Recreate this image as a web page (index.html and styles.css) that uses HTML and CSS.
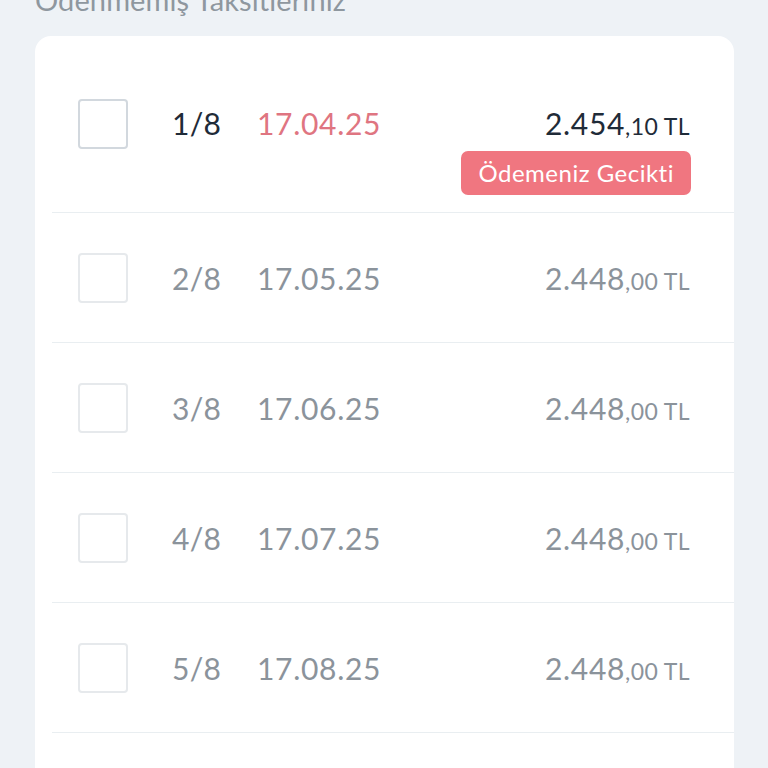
FILE: index.html
```html
<!DOCTYPE html>
<html lang="tr">
<head>
<meta charset="utf-8">
<link rel="stylesheet" href="styles.css">
</head>
<body>
<div class="page">
  <h2 class="title">Ödenmemiş Taksitleriniz</h2>
  <div class="card">
    <div class="row first">
      <span class="check dark"></span>
      <span class="no">1/8</span>
      <span class="date late">17.04.25</span>
      <span class="amount"><span class="main">2.454</span><span class="dec">,10 TL</span>
        <span class="badge">Ödemeniz Gecikti</span>
      </span>
    </div>
    <div class="row">
      <span class="check"></span>
      <span class="no">2/8</span>
      <span class="date">17.05.25</span>
      <span class="amount"><span class="main">2.448</span><span class="dec">,00 TL</span></span>
    </div>
    <div class="row">
      <span class="check"></span>
      <span class="no">3/8</span>
      <span class="date">17.06.25</span>
      <span class="amount"><span class="main">2.448</span><span class="dec">,00 TL</span></span>
    </div>
    <div class="row">
      <span class="check"></span>
      <span class="no">4/8</span>
      <span class="date">17.07.25</span>
      <span class="amount"><span class="main">2.448</span><span class="dec">,00 TL</span></span>
    </div>
    <div class="row">
      <span class="check"></span>
      <span class="no">5/8</span>
      <span class="date">17.08.25</span>
      <span class="amount"><span class="main">2.448</span><span class="dec">,00 TL</span></span>
    </div>
    <div class="row">
      <span class="check"></span>
      <span class="no">6/8</span>
      <span class="date">17.09.25</span>
      <span class="amount"><span class="main">2.448</span><span class="dec">,00 TL</span></span>
    </div>
  </div>
</div>
</body>
</html>
```
FILE: styles.css
```css
html, body {
  margin: 0;
  padding: 0;
  background: #eef2f6;
  font-family: Lato, "Noto Sans", sans-serif;
  overflow: hidden;
}
.page {
  margin-top: -22px;
  padding: 0 34px 0 35px;
}
.title {
  margin: 0;
  height: 58px;
  font-size: 29px;
  line-height: 44px;
  font-weight: 400;
  color: #8e979f;
  letter-spacing: 0.1px;
}
.card {
  background: #fff;
  border-radius: 16px;
  padding-left: 17px;
}
.row {
  display: flex;
  align-items: center;
  height: 129px;
  border-bottom: 1px solid #e9eef1;
  padding: 0 44px 0 26px;
  color: #8b939b;
}
.row.first {
  height: 176px;
  color: #1f2b38;
}
.row.first .no,
.row.first .date,
.row.first .amount {
  margin-top: -3px;
}
.check {
  width: 46px;
  height: 46px;
  border: 2px solid #e6e9ec;
  border-radius: 4px;
  flex: none;
}
.check.dark {
  border-color: #d2d8de;
}
.no {
  margin-left: 44px;
  font-size: 30px;
  width: 85px;
  letter-spacing: 0.3px;
}
.date {
  font-size: 30px;
  letter-spacing: 0.7px;
}
.date.late {
  color: #df7581;
}
.amount {
  margin-left: auto;
  position: relative;
  white-space: nowrap;
}
.main {
  font-size: 30px;
  letter-spacing: 0.7px;
}
.dec {
  font-size: 23px;
  letter-spacing: 0.4px;
}
.badge {
  position: absolute;
  right: -1px;
  top: 46px;
  height: 44px;
  line-height: 43px;
  padding: 0 17px;
  background: #f07680;
  color: #fff;
  border-radius: 7px;
  font-size: 24px;
  letter-spacing: 0.5px;
  white-space: nowrap;
}
```
